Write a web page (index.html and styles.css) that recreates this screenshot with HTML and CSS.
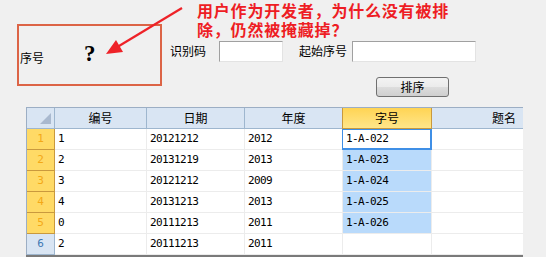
FILE: index.html
```html
<!DOCTYPE html>
<html>
<head>
<meta charset="utf-8">
<link rel="stylesheet" href="styles.css">
</head>
<body>
<div class="page">
  <div class="top">
    <div class="seq-box">
      <span class="seq-label">序号</span>
      <span class="qmark">?</span>
    </div>
    <div class="fields">
      <div class="field-row">
        <span class="lbl lbl-code">识别码</span>
        <span class="textbox tb-code"></span>
        <span class="lbl lbl-start">起始序号</span>
        <span class="textbox tb-start"></span>
      </div>
      <div class="btn-row">
        <button class="btn">排序</button>
      </div>
    </div>
  </div>

  <div class="grid-wrap">
    <div class="grid">
      <div class="c hd corner"><svg width="28" height="20" viewBox="0 0 28 20"><polygon points="13,16 24,16 24,5" fill="#a9b9cf"/></svg></div>
      <div class="c hd">编号</div>
      <div class="c hd">日期</div>
      <div class="c hd">年度</div>
      <div class="c hd hd-sel">字号</div>
      <div class="c hd hd-last">题名</div>

      <div class="c rh sel">1</div><div class="c">1</div><div class="c">20121212</div><div class="c">2012</div><div class="c cur">1-A-022</div><div class="c"></div>
      <div class="c rh sel">2</div><div class="c">2</div><div class="c">20131219</div><div class="c">2013</div><div class="c pick">1-A-023</div><div class="c"></div>
      <div class="c rh sel">3</div><div class="c">3</div><div class="c">20121212</div><div class="c">2009</div><div class="c pick">1-A-024</div><div class="c"></div>
      <div class="c rh sel">4</div><div class="c">4</div><div class="c">20131213</div><div class="c">2013</div><div class="c pick">1-A-025</div><div class="c"></div>
      <div class="c rh sel">5</div><div class="c">0</div><div class="c">20111213</div><div class="c">2011</div><div class="c pick">1-A-026</div><div class="c"></div>
      <div class="c rh">6</div><div class="c">2</div><div class="c">20111213</div><div class="c">2011</div><div class="c"></div><div class="c"></div>
    </div>
  </div>

  <div class="note"><span class="note-line">用户作为开发者，为什么没有被排</span><span class="note-line">除，仍然被掩藏掉？</span></div>
  <svg class="arrow" width="546" height="110" viewBox="0 0 546 110">
    <line x1="182" y1="8" x2="114" y2="49" stroke="#ee2228" stroke-width="2.2"/>
    <polygon points="106,54 116,40 123,52" fill="#ee2228"/>
  </svg>
</div>
</body>
</html>
```

FILE: styles.css
```css
* { box-sizing: border-box; }
html, body { margin: 0; padding: 0; }
body {
  background: #f0f0f0;
  font-family: "Noto Sans CJK SC", "Noto Sans", sans-serif;
  font-size: 12px;
  color: #000;
}
.page {
  position: relative;
  width: 546px;
  height: 257px;
  overflow: hidden;
}
.top {
  display: flex;
  align-items: flex-start;
  height: 107px;
  padding: 24px 0 0 17px;
}
.seq-box {
  width: 145px;
  height: 62px;
  border: 2px solid #dc6446;
  display: flex;
  align-items: center;
  padding-left: 1px;
}
.seq-label {
  margin-top: 5px;
  line-height: 14px;
}
.qmark {
  margin-left: 40px;
  margin-top: -2px;
  font-family: "Liberation Serif", serif;
  font-weight: bold;
  font-size: 23px;
  line-height: 24px;
}
.fields {
  margin-left: 8px;
  margin-top: 17px;
}
.field-row {
  display: flex;
  align-items: center;
  height: 21px;
}
.lbl { line-height: 14px; margin-top: -2px; }
.lbl-code { width: 49px; }
.lbl-start { margin-left: 16px; width: 53px; }
.textbox {
  display: block;
  height: 21px;
  background: #fff;
  border: 1px solid #e3e3e3;
  border-top-color: #a0a0a0;
  border-left-color: #a0a0a0;
}
.tb-code { width: 64px; }
.tb-start { width: 124px; }
.btn-row {
  margin-top: 15px;
  padding-left: 206px;
}
.btn {
  display: block;
  width: 73px;
  height: 20px;
  padding: 0;
  border: 1px solid #707070;
  border-radius: 3px;
  background: linear-gradient(#f3f3f3, #ebebeb 50%, #dddddd 51%, #cfcfcf);
  font-family: "Noto Sans CJK SC", sans-serif;
  font-size: 12px;
  line-height: 16px;
  color: #000;
}
.grid-wrap {
  margin-left: 26px;
  width: 497px;
  height: 150px;
  overflow: hidden;
  border-bottom: 2px solid #7a7a7a;
}
.grid {
  display: grid;
  grid-template-columns: 28px 92px 98px 98px 89px 145px;
  grid-auto-rows: 21px;
  width: 551px;
  border-top: 1px solid #9caec4;
  border-left: 1px solid #9caec4;
  background: #fff;
}
.c {
  border-right: 1px solid #ececec;
  border-bottom: 1px solid #ececec;
  padding-left: 3px;
  font-family: "DejaVu Sans Mono", monospace;
  font-size: 11px;
  letter-spacing: -0.6px;
  line-height: 20px;
  white-space: nowrap;
  overflow: hidden;
}
.hd {
  background: #d9e5f3;
  border-right-color: #9eb6ce;
  border-bottom-color: #9eb6ce;
  font-family: "Noto Sans CJK SC", sans-serif;
  font-size: 12px;
  letter-spacing: 0;
  text-align: center;
  padding-left: 0;
}
.corner { padding: 0; line-height: 0; }
.corner svg { display: block; }
.hd-sel {
  background: linear-gradient(#ffd454, #ffe68a);
  border: 1px solid #c9993e;
  border-top: none;
  border-left: 1px solid #c9993e;
  margin-left: -1px;
}
.rh {
  background: #d9e5f3;
  border-right-color: #9eb6ce;
  border-bottom-color: #9eb6ce;
  color: #3c78b4;
  text-align: center;
  padding-left: 0;
  letter-spacing: 0;
}
.rh.sel {
  background: #ffda66;
  border-right-color: #c9993e;
  border-bottom-color: #c9993e;
  color: #f3a817;
}
.pick {
  background: #b9dafb;
}
.cur {
  box-shadow: inset 0 0 0 1px #3f8fe6;
  border-right-color: #3f8fe6;
  border-bottom-color: #3f8fe6;
  margin-left: -1px;
  padding-left: 4px;
}
.note {
  position: absolute;
  left: 197px;
  top: 1px;
  color: #ee1d24;
  font-family: "Noto Sans CJK SC", sans-serif;
  font-weight: bold;
  font-size: 16px;
  letter-spacing: 0.8px;
}
.note-line {
  display: block;
  height: 19px;
  line-height: 19px;
  white-space: nowrap;
}
.arrow {
  position: absolute;
  left: 0;
  top: 0;
}
```
